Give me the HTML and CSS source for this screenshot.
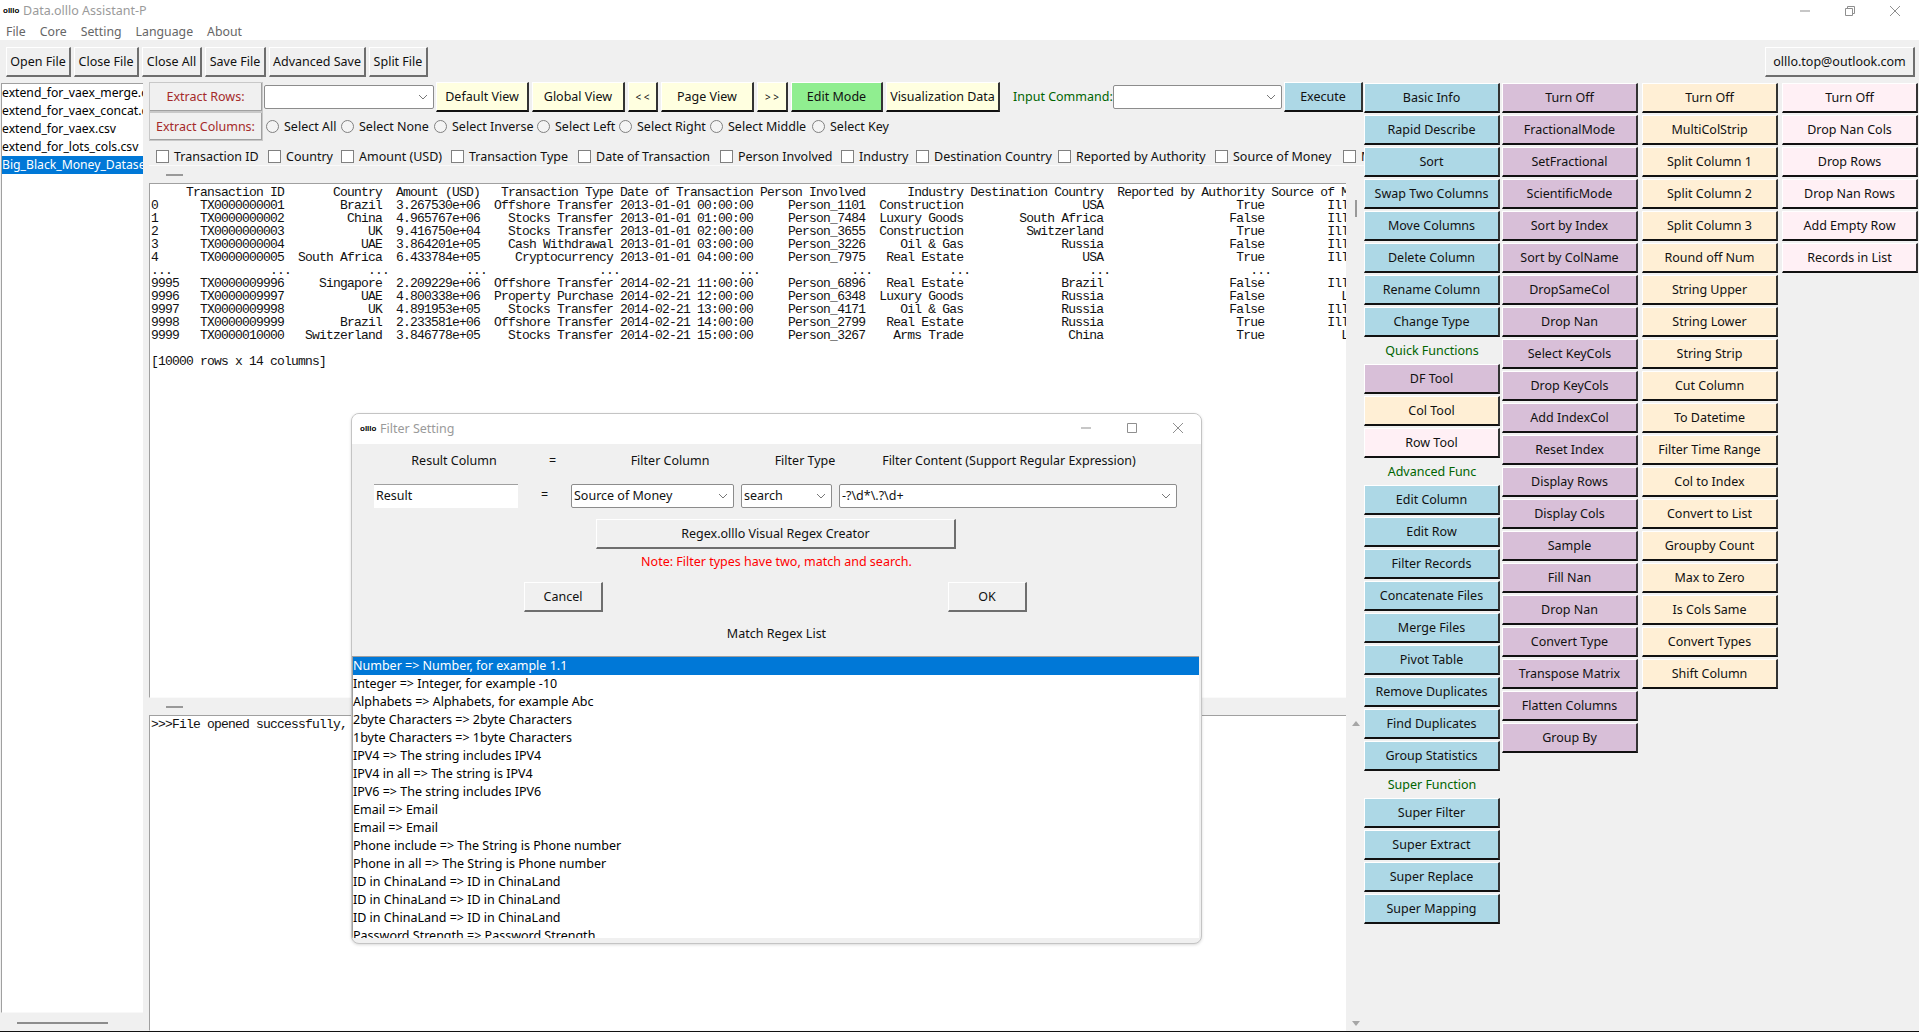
FILE: index.html
```html
<!DOCTYPE html>
<html lang="en">
<head>
    <meta charset="UTF-8">
    <meta name="viewport" content="width=device-width, initial-scale=1.0">
    <title>Data.olllo Assistant-P</title>
    <link rel="stylesheet" href="styles.css">
</head>
<body>
    <div class="titlebar">
        <span class="logo">olllo</span>
        <span class="title-text">Data.olllo Assistant-P</span>
        <div class="win-controls">
            <svg viewBox="0 0 12 12"><path d="M1 6h10"/></svg>
            <svg viewBox="0 0 12 12"><path d="M1.5 3.5h7v7h-7zM3.5 3.5v-2h7v7h-2"/></svg>
            <svg viewBox="0 0 12 12"><path d="M1 1l10 10M11 1L1 11"/></svg>
        </div>
    </div>
    <div class="menubar">
        <span>File</span><span>Core</span><span>Setting</span><span>Language</span><span>About</span>
    </div>

    <div class="toolbar">
        <button class="btn">Open File</button>
        <button class="btn">Close File</button>
        <button class="btn">Close All</button>
        <button class="btn">Save File</button>
        <button class="btn">Advanced Save</button>
        <button class="btn">Split File</button>
        <button class="btn email">olllo.top@outlook.com</button>
    </div>

    <div class="main">
        <div class="files">
            <ul class="file-list">
                <li>extend_for_vaex_merge.csv</li>
                <li>extend_for_vaex_concat.csv</li>
                <li>extend_for_vaex.csv</li>
                <li>extend_for_lots_cols.csv</li>
                <li class="selected">Big_Black_Money_Dataset.csv</li>
            </ul>
            <div class="file-scroll"><i></i></div>
        </div>

        <div class="center">
            <div class="view-row">
                <button class="btn extract">Extract Rows:</button>
                <div class="combo"><svg class="chev" viewBox="0 0 10 6"><path d="M1 1l4 4 4-4"/></svg></div>
                <button class="btn yellow">Default View</button>
                <button class="btn yellow">Global View</button>
                <button class="btn yellow small">&lt; &lt;</button>
                <button class="btn yellow">Page View</button>
                <button class="btn yellow small">&gt; &gt;</button>
                <button class="btn green">Edit Mode</button>
                <button class="btn yellow">Visualization Data</button>
                <span class="green-label">Input Command:</span>
                <div class="combo"><svg class="chev" viewBox="0 0 10 6"><path d="M1 1l4 4 4-4"/></svg></div>
                <button class="btn blue">Execute</button>
            </div>

            <div class="radio-row">
                <button class="btn extract">Extract Columns:</button>
                <label class="opt"><i class="radio"></i>Select All</label>
                <label class="opt"><i class="radio"></i>Select None</label>
                <label class="opt"><i class="radio"></i>Select Inverse</label>
                <label class="opt"><i class="radio"></i>Select Left</label>
                <label class="opt"><i class="radio"></i>Select Right</label>
                <label class="opt"><i class="radio"></i>Select Middle</label>
                <label class="opt"><i class="radio"></i>Select Key</label>
            </div>

            <div class="check-row">
                <label class="opt"><i class="check"></i>Transaction ID</label>
                <label class="opt"><i class="check"></i>Country</label>
                <label class="opt"><i class="check"></i>Amount (USD)</label>
                <label class="opt"><i class="check"></i>Transaction Type</label>
                <label class="opt"><i class="check"></i>Date of Transaction</label>
                <label class="opt"><i class="check"></i>Person Involved</label>
                <label class="opt"><i class="check"></i>Industry</label>
                <label class="opt"><i class="check"></i>Destination Country</label>
                <label class="opt"><i class="check"></i>Reported by Authority</label>
                <label class="opt"><i class="check"></i>Source of Money</label>
                <label class="opt"><i class="check"></i>Money Laundering Risk Score</label>
            </div>

            <div class="sash"><i></i></div>

            <div class="pane pane-top">
<pre class="console">     Transaction ID       Country  Amount (USD)   Transaction Type Date of Transaction Person Involved      Industry Destination Country  Reported by Authority Source of Money
0      TX0000000001        Brazil  3.267530e+06  Offshore Transfer 2013-01-01 00:00:00     Person_1101  Construction                 USA                   True         Illegal
1      TX0000000002         China  4.965767e+06    Stocks Transfer 2013-01-01 01:00:00     Person_7484  Luxury Goods        South Africa                  False         Illegal
2      TX0000000003            UK  9.416750e+04    Stocks Transfer 2013-01-01 02:00:00     Person_3655  Construction         Switzerland                   True         Illegal
3      TX0000000004           UAE  3.864201e+05    Cash Withdrawal 2013-01-01 03:00:00     Person_3226     Oil &amp; Gas              Russia                  False         Illegal
4      TX0000000005  South Africa  6.433784e+05     Cryptocurrency 2013-01-01 04:00:00     Person_7975   Real Estate                 USA                   True         Illegal
...              ...           ...           ...                ...                 ...             ...           ...                 ...                    ...             ...
9995   TX0000009996     Singapore  2.209229e+06  Offshore Transfer 2014-02-21 11:00:00     Person_6896   Real Estate              Brazil                  False         Illegal
9996   TX0000009997           UAE  4.800338e+06  Property Purchase 2014-02-21 12:00:00     Person_6348  Luxury Goods              Russia                  False           Legal
9997   TX0000009998            UK  4.891953e+05    Stocks Transfer 2014-02-21 13:00:00     Person_4171     Oil &amp; Gas              Russia                  False         Illegal
9998   TX0000009999        Brazil  2.233581e+06  Offshore Transfer 2014-02-21 14:00:00     Person_2799   Real Estate              Russia                   True         Illegal
9999   TX0000010000   Switzerland  3.846778e+05    Stocks Transfer 2014-02-21 15:00:00     Person_3267    Arms Trade               China                   True           Legal

[10000 rows x 14 columns]</pre>
                <div class="vscroll"><i class="thumb"></i></div>
            </div>

            <div class="sash sash-low"><i></i></div>

            <div class="pane pane-low">
<pre class="console">&gt;&gt;&gt;File opened successfully, </pre>
                <div class="vscroll arrows"><i class="up"></i><i class="down"></i></div>
            </div>
        </div>

        <div class="tools">
            <div class="tool-col col-blue">
                <button class="btn">Basic Info</button>
                <button class="btn">Rapid Describe</button>
                <button class="btn">Sort</button>
                <button class="btn">Swap Two Columns</button>
                <button class="btn">Move Columns</button>
                <button class="btn">Delete Column</button>
                <button class="btn">Rename Column</button>
                <button class="btn">Change Type</button>
                <div class="group-label">Quick Functions</div>
                <button class="btn thistle">DF Tool</button>
                <button class="btn papaya">Col Tool</button>
                <button class="btn blush">Row Tool</button>
                <div class="group-label">Advanced Func</div>
                <button class="btn">Edit Column</button>
                <button class="btn">Edit Row</button>
                <button class="btn">Filter Records</button>
                <button class="btn">Concatenate Files</button>
                <button class="btn">Merge Files</button>
                <button class="btn">Pivot Table</button>
                <button class="btn">Remove Duplicates</button>
                <button class="btn">Find Duplicates</button>
                <button class="btn">Group Statistics</button>
                <div class="group-label">Super Function</div>
                <button class="btn">Super Filter</button>
                <button class="btn">Super Extract</button>
                <button class="btn">Super Replace</button>
                <button class="btn">Super Mapping</button>
            </div>
            <div class="tool-col col-thistle">
                <button class="btn">Turn Off</button>
                <button class="btn">FractionalMode</button>
                <button class="btn">SetFractional</button>
                <button class="btn">ScientificMode</button>
                <button class="btn">Sort by Index</button>
                <button class="btn">Sort by ColName</button>
                <button class="btn">DropSameCol</button>
                <button class="btn">Drop Nan</button>
                <button class="btn">Select KeyCols</button>
                <button class="btn">Drop KeyCols</button>
                <button class="btn">Add IndexCol</button>
                <button class="btn">Reset Index</button>
                <button class="btn">Display Rows</button>
                <button class="btn">Display Cols</button>
                <button class="btn">Sample</button>
                <button class="btn">Fill Nan</button>
                <button class="btn">Drop Nan</button>
                <button class="btn">Convert Type</button>
                <button class="btn">Transpose Matrix</button>
                <button class="btn">Flatten Columns</button>
                <button class="btn">Group By</button>
            </div>
            <div class="tool-col col-papaya">
                <button class="btn">Turn Off</button>
                <button class="btn">MultiColStrip</button>
                <button class="btn">Split Column 1</button>
                <button class="btn">Split Column 2</button>
                <button class="btn">Split Column 3</button>
                <button class="btn">Round off Num</button>
                <button class="btn">String Upper</button>
                <button class="btn">String Lower</button>
                <button class="btn">String Strip</button>
                <button class="btn">Cut Column</button>
                <button class="btn">To Datetime</button>
                <button class="btn">Filter Time Range</button>
                <button class="btn">Col to Index</button>
                <button class="btn">Convert to List</button>
                <button class="btn">Groupby Count</button>
                <button class="btn">Max to Zero</button>
                <button class="btn">Is Cols Same</button>
                <button class="btn">Convert Types</button>
                <button class="btn">Shift Column</button>
            </div>
            <div class="tool-col col-blush">
                <button class="btn">Turn Off</button>
                <button class="btn">Drop Nan Cols</button>
                <button class="btn">Drop Rows</button>
                <button class="btn">Drop Nan Rows</button>
                <button class="btn">Add Empty Row</button>
                <button class="btn">Records in List</button>
            </div>
        </div>
    </div>

    <!-- Filter Setting dialog floats over the main window -->
    <div class="dialog">
        <div class="dlg-title">
            <span class="logo">olllo</span>
            <span class="title-text">Filter Setting</span>
            <div class="win-controls dlg-controls">
                <svg viewBox="0 0 12 12"><path d="M1 6h10"/></svg>
                <svg viewBox="0 0 12 12"><path d="M1.5 1.5h9v9h-9z"/></svg>
                <svg viewBox="0 0 12 12"><path d="M1 1l10 10M11 1L1 11"/></svg>
            </div>
        </div>
        <div class="dlg-labels">
            <span>Result Column</span>
            <span class="eq">=</span>
            <span>Filter Column</span>
            <span>Filter Type</span>
            <span>Filter Content (Support Regular Expression)</span>
        </div>
        <div class="dlg-inputs">
            <div class="entry">Result</div>
            <span class="eq">=</span>
            <div class="combo">Source of Money<svg class="chev" viewBox="0 0 10 6"><path d="M1 1l4 4 4-4"/></svg></div>
            <div class="combo">search<svg class="chev" viewBox="0 0 10 6"><path d="M1 1l4 4 4-4"/></svg></div>
            <div class="combo">-?\d*\.?\d+<svg class="chev" viewBox="0 0 10 6"><path d="M1 1l4 4 4-4"/></svg></div>
        </div>
        <button class="btn regex-btn">Regex.olllo Visual Regex Creator</button>
        <div class="note">Note: Filter types have two, match and search.</div>
        <div class="dlg-actions">
            <button class="btn">Cancel</button>
            <button class="btn">OK</button>
        </div>
        <div class="list-title">Match Regex List</div>
        <ul class="regex-list">
            <li class="selected">Number =&gt; Number, for example 1.1</li>
            <li>Integer =&gt; Integer, for example -10</li>
            <li>Alphabets =&gt; Alphabets, for example Abc</li>
            <li>2byte Characters =&gt; 2byte Characters</li>
            <li>1byte Characters =&gt; 1byte Characters</li>
            <li>IPV4 =&gt; The string includes IPV4</li>
            <li>IPV4 in all =&gt; The string is IPV4</li>
            <li>IPV6 =&gt; The string includes IPV6</li>
            <li>Email =&gt; Email</li>
            <li>Email =&gt; Email</li>
            <li>Phone include =&gt; The String is Phone number</li>
            <li>Phone in all =&gt; The String is Phone number</li>
            <li>ID in ChinaLand =&gt; ID in ChinaLand</li>
            <li>ID in ChinaLand =&gt; ID in ChinaLand</li>
            <li>ID in ChinaLand =&gt; ID in ChinaLand</li>
            <li>Password Strength =&gt; Password Strength</li>
        </ul>
    </div>
</body>
</html>
```

FILE: styles.css
```css
* {
    box-sizing: border-box;
}

body {
    margin: 0;
    width: 1919px;
    height: 1032px;
    overflow: hidden;
    position: relative;
    background-color: #f0f0f0;
    color: #111;
    font-family: "Noto Sans", sans-serif;
    font-size: 12.5px;
}

ul {
    list-style: none;
    margin: 0;
    padding: 0;
}

/* window chrome */
.titlebar {
    display: flex;
    align-items: center;
    height: 21px;
    padding-left: 3px;
    background-color: #fff;
}

.logo {
    width: 17px;
    margin-right: 3px;
    font-family: "Liberation Sans", sans-serif;
    font-size: 8px;
    font-weight: 700;
    color: #000;
}

.title-text {
    color: #9a9a9a;
}

.win-controls {
    display: flex;
    gap: 33px;
    margin-left: auto;
    margin-right: 18px;
}

.win-controls svg {
    width: 12px;
    height: 12px;
    fill: none;
    stroke: #8f8f8f;
    stroke-width: 1;
}

.menubar {
    display: flex;
    gap: 14px;
    height: 19px;
    padding-left: 6px;
    background-color: #fff;
    color: #666;
    font-size: 12.3px;
    line-height: 21px;
}

.toolbar {
    display: grid;
    grid-template-columns: 68px 68px 63px 64px 100px 62px 1fr;
    height: 42px;
    padding: 7px 4px 5px 6px;
}

.toolbar .btn {
    margin-right: 3px;
}

.toolbar .email {
    justify-self: end;
    width: 150px;
    margin-right: 0;
}

/* tk style raised button */
.btn {
    display: block;
    padding: 0;
    background-color: #f0f0f0;
    color: #111;
    border-style: solid;
    border-width: 1px 2px 2px 1px;
    border-color: #fff #6e6e6e #6e6e6e #fff;
    font-family: inherit;
    font-size: inherit;
    white-space: nowrap;
}

.yellow, .green, .blue, .tool-col .btn {
    border-color: #fff #333 #111 #fff;
}

.yellow {
    background-color: #ffffe0;
}

.green {
    background-color: #90ee90;
}

.blue, .col-blue .btn {
    background-color: #add8e6;
}

.col-thistle .btn, .col-blue .btn.thistle {
    background-color: #d8bfd8;
}

.col-papaya .btn, .col-blue .btn.papaya {
    background-color: #ffefd5;
}

.col-blush .btn, .col-blue .btn.blush {
    background-color: #fff0f5;
}

.small {
    font-size: 10px;
}

.extract {
    color: #a52a2a;
    border-color: #fff #a0a0a0 #a0a0a0 #fff;
    outline: 1px solid #c8c8c8;
    outline-offset: -1px;
}

/* main three part layout */
.main {
    display: flex;
    height: 950px;
    border-bottom: 1px solid #111;
}

.files {
    width: 149px;
    padding: 1px 6px 0 1px;
}

.file-list {
    height: 930px;
    overflow: hidden;
    background-color: #fff;
    border-left: 1px solid #a0a0a0;
    border-top: 1px solid #a0a0a0;
    border-bottom: 1px solid #f8f8f8;
    font-size: 12.2px;
    color: #000;
}

.file-list li, .regex-list li {
    height: 18px;
    line-height: 18px;
    white-space: nowrap;
    overflow: hidden;
}

.file-list .selected, .regex-list .selected {
    background-color: #0078d7;
    color: #fff;
}

.file-scroll {
    padding: 9px 0 0 16px;
}

.file-scroll i {
    display: block;
    width: 91px;
    height: 2px;
    background-color: #8c8c8c;
}

.center {
    display: flex;
    flex-direction: column;
    width: 1215px;
}

.view-row {
    display: grid;
    grid-template-columns: 115px 172px 96px 96px 33px 96px 34px 95px 117px 110px 171px 79px;
    height: 30px;
}

.view-row .btn {
    margin-right: 3px;
}

.view-row .extract {
    margin-right: 1px;
}

.view-row .blue {
    margin-right: 0;
}

.view-row > .combo {
    margin: 3px 2px 3px 0;
}

.green-label {
    padding-left: 10px;
    line-height: 30px;
    color: #006400;
    white-space: nowrap;
}

.combo {
    display: flex;
    align-items: center;
    justify-content: space-between;
    padding: 0 5px 0 2px;
    background-color: #fff;
    border: 1px solid #8c8c8c;
    border-radius: 2px;
    white-space: nowrap;
}

.view-row > .combo {
    justify-content: flex-end;
}

.chev {
    width: 10px;
    height: 6px;
    fill: none;
    stroke: #777;
    stroke-width: 1;
}

.radio-row {
    display: grid;
    grid-template-columns: 117px 75px 93px 103px 82px 91px 102px auto;
    height: 29px;
}

.radio-row .btn {
    margin-right: 3px;
}

.check-row {
    display: grid;
    grid-template-columns: 112px 73px 110px 127px 142px 121px 75px 142px 157px 128px 21px;
    height: 25px;
    padding: 7px 0 0 7px;
    border-bottom: 1px solid #fafafa;
    overflow: hidden;
}

.opt {
    display: flex;
    align-items: center;
    gap: 5px;
    overflow: hidden;
    white-space: nowrap;
}

.radio, .check {
    flex: none;
    display: block;
    width: 13px;
    height: 13px;
    background-color: #fff;
    border: 1px solid #808080;
}

.radio {
    background-color: #f4f4f4;
    border-radius: 50%;
}

.sash {
    height: 17px;
    padding: 8px 0 0 17px;
}

.sash i {
    display: block;
    width: 17px;
    height: 2px;
    background-color: #999;
}

.pane {
    display: flex;
}

.pane-top {
    height: 515px;
}

.pane-low {
    flex: 1;
    min-height: 0;
}

.console {
    flex: 1;
    min-width: 0;
    margin: 0;
    padding: 2px 0 0 1px;
    overflow: hidden;
    background-color: #fff;
    border-top: 1px solid #a0a0a0;
    border-left: 1px solid #a0a0a0;
    border-bottom: 1px solid #fafafa;
    font-family: "Liberation Mono", monospace;
    font-size: 13px;
    letter-spacing: -0.8px;
    line-height: 13px;
    color: #111;
}

.sash-low {
    height: 17px;
}

.vscroll {
    width: 18px;
    flex: none;
    padding: 17px 0 0 9px;
}

.thumb {
    display: block;
    width: 2px;
    height: 17px;
    background-color: #999;
}

.vscroll.arrows {
    display: flex;
    flex-direction: column;
    justify-content: space-between;
    padding: 6px 0 5px 6px;
}

.up, .down {
    display: block;
    width: 0;
    height: 0;
    border-left: 4px solid transparent;
    border-right: 4px solid transparent;
}

.up {
    border-bottom: 5px solid #a6a6a6;
}

.down {
    border-top: 5px solid #a6a6a6;
}

/* function button columns */
.tools {
    display: flex;
    padding-top: 1px;
}

.tool-col {
    width: 136px;
    margin-left: 4px;
}

.col-blue {
    margin-left: 0;
}

.col-thistle {
    margin-left: 2px;
}

.tool-col .btn {
    width: 136px;
    height: 30px;
    margin-bottom: 2px;
}

.group-label {
    height: 25px;
    line-height: 24px;
    text-align: center;
    color: #006400;
}

/* dialog */
.dialog {
    position: absolute;
    left: 351px;
    top: 413px;
    width: 851px;
    height: 531px;
    background-color: #f0f0f0;
    border: 1px solid #c4c4c4;
    border-radius: 8px;
    box-shadow: 0 1px 3px rgba(0, 0, 0, 0.15);
    overflow: hidden;
}

.dlg-title {
    display: flex;
    align-items: center;
    height: 30px;
    padding: 0 0 2px 8px;
    background-color: #fff;
}

.dlg-controls {
    gap: 34px;
    margin-right: 17px;
}

.dlg-labels {
    display: grid;
    grid-template-columns: 176px 48px 160px 110px 298px;
    height: 34px;
    padding-left: 14px;
    line-height: 34px;
    text-align: center;
    white-space: nowrap;
}

.dlg-labels .eq {
    padding-left: 7px;
    text-align: left;
}

.dlg-inputs {
    display: grid;
    grid-template-columns: 144px 53px 170px 98px 345px;
    height: 22px;
    margin-top: 6px;
    padding-left: 22px;
    line-height: 22px;
}

.dlg-inputs .eq {
    text-align: center;
}

.dlg-inputs .combo {
    margin-right: 7px;
}

.entry {
    padding-left: 2px;
    background-color: #fff;
    border-top: 1px solid #a0a0a0;
}

.regex-btn {
    width: 360px;
    height: 30px;
    margin: 13px 0 0 244px;
}

.note {
    height: 25px;
    line-height: 25px;
    text-align: center;
    color: #f00;
}

.dlg-actions {
    display: flex;
    justify-content: space-between;
    width: 503px;
    margin: 8px 0 0 172px;
}

.dlg-actions .btn {
    width: 79px;
    height: 30px;
}

.list-title {
    height: 44px;
    line-height: 44px;
    text-align: center;
}

.regex-list {
    height: 282px;
    margin-right: 2px;
    overflow: hidden;
    background-color: #fff;
    border-top: 1px solid #a0a0a0;
    border-left: 1px solid #a0a0a0;
    color: #000;
}
```
